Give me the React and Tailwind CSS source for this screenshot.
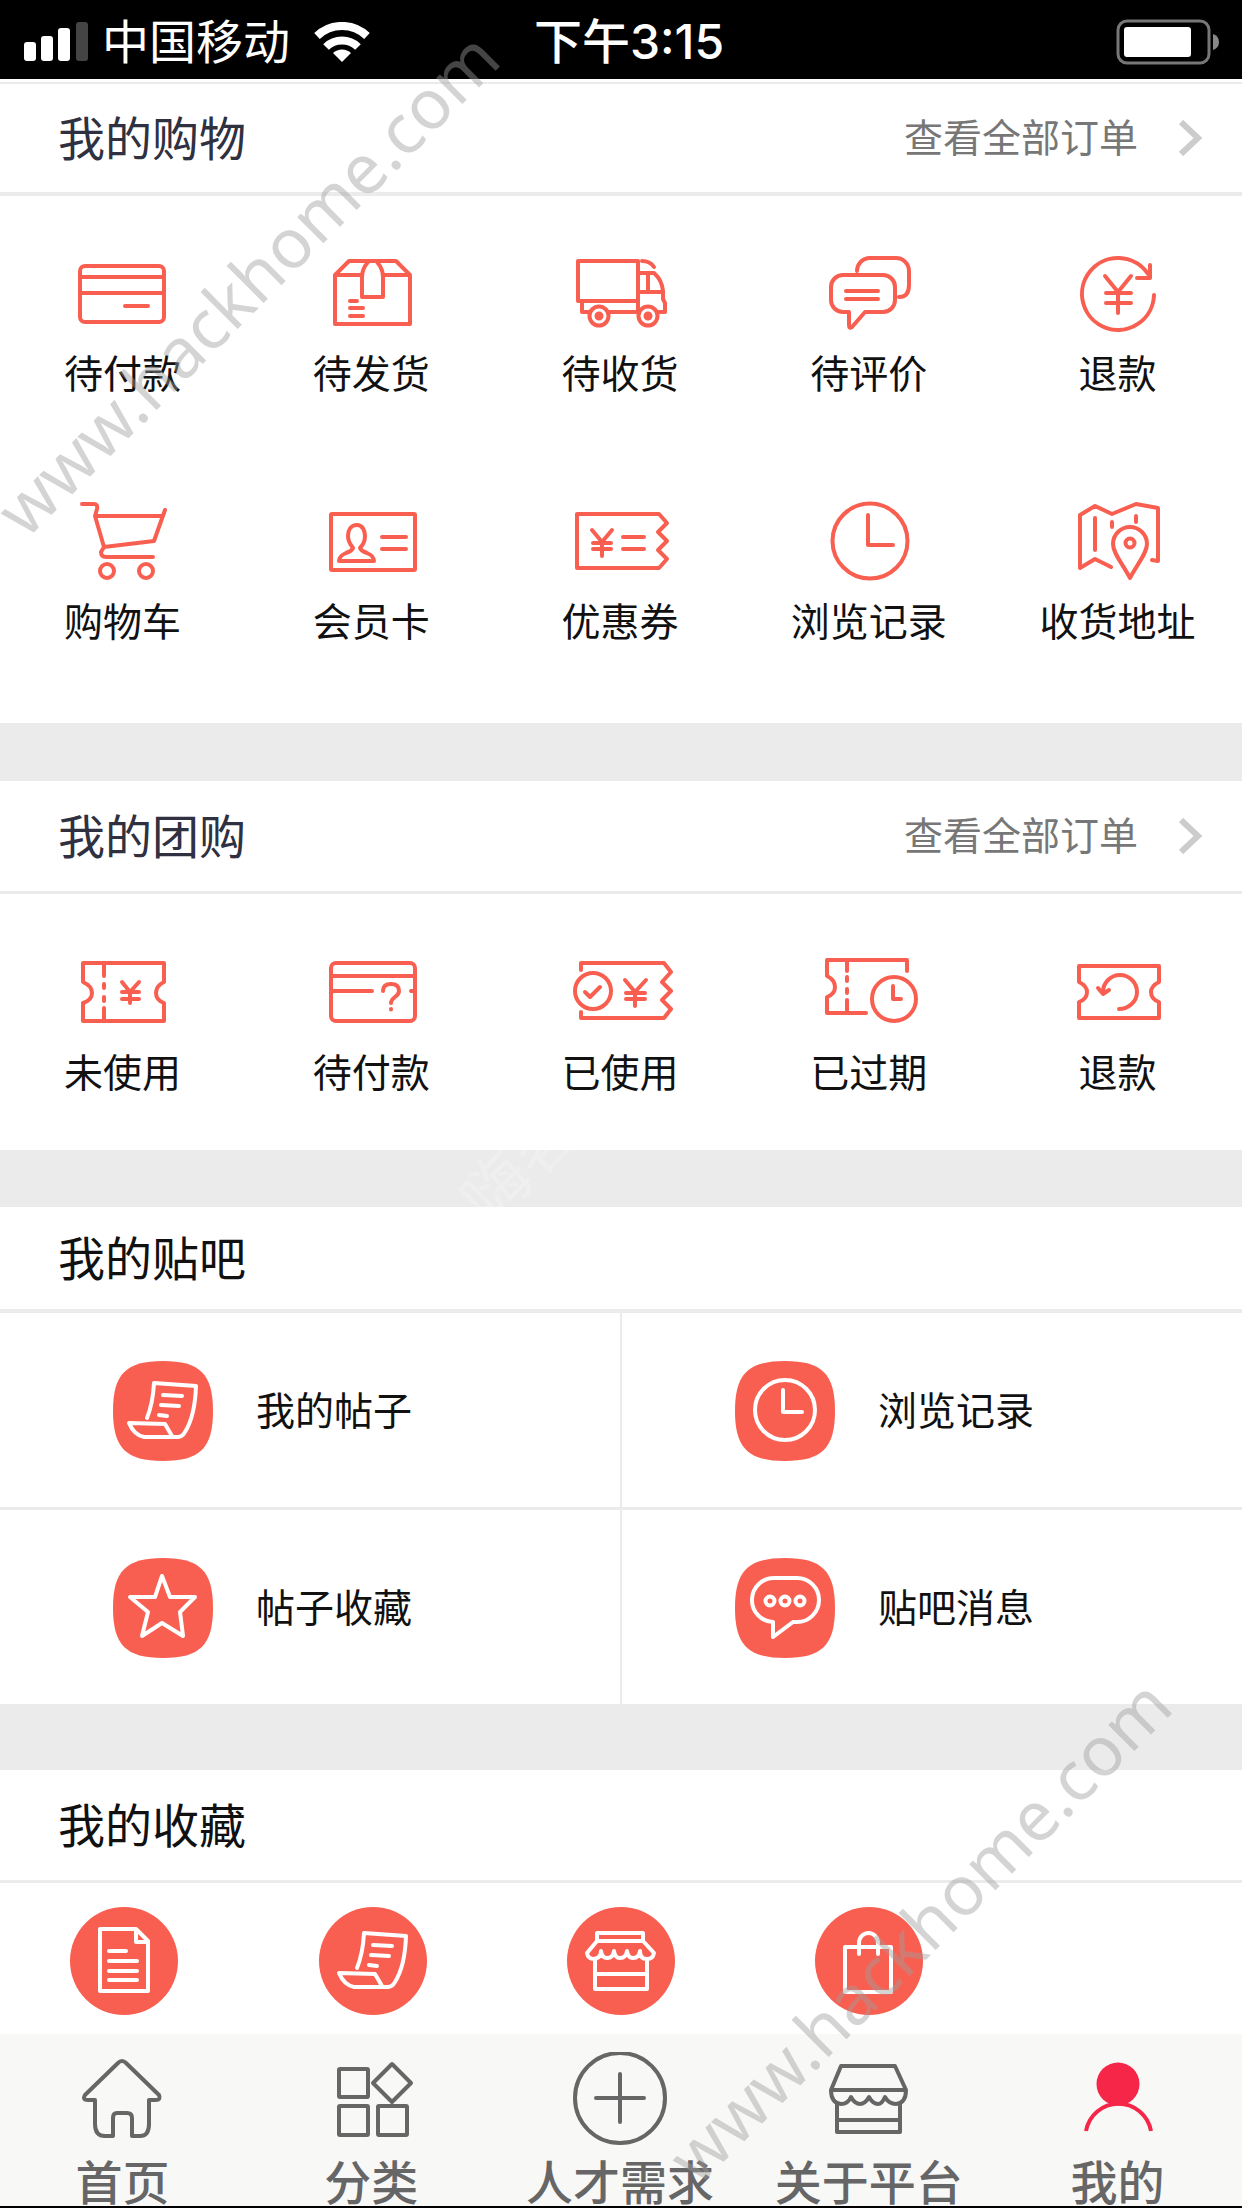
import React from "react";

const CORAL = "#f95f50";

/* ---------- drawing helpers ---------- */

// Line icon on a canvas whose origin is its centre.
function LineIcon({ children, color = CORAL, className = "h-[84px] w-[110px]", box = "-55 -42 110 84", width = 4 }) {
  return (
    <svg
      aria-hidden="true"
      viewBox={box}
      className={className}
      fill="none"
      stroke={color}
      strokeWidth={width}
      strokeLinecap="round"
      strokeLinejoin="round"
    >
      {children}
    </svg>
  );
}

/* ---------- shopping icons ---------- */

const CardIcon = () => (
  <LineIcon>
    <rect x="-42" y="-27" width="84" height="56" rx="5" />
    <path d="M-42-16H42M-42 0H42M3 13H26" />
  </LineIcon>
);

const BoxIcon = () => (
  <LineIcon>
    <path d="M-36-18L-22-32H25L39-18V31H-36ZM-36-18H-9M12-18H39" />
    <path d="M-3-31Q-9-24-9-16V4H12V-16Q12-24 6-31" />
    <path d="M-21 8H-14M-21 15H-8M-21 23H-8" />
  </LineIcon>
);

const TruckIcon = () => (
  <LineIcon>
    <path d="M-42-32H18V8H-42ZM-38 8V19H-31M-11 19H18M18 8V19M38 19H45V10L43 6V-2Q42-13 34-20H18M18-1H43M28-20V-1" />
    <path d="M22-32Q30-32 34-26" />
    <circle cx="-21" cy="23" r="9.5" />
    <circle cx="-21" cy="23" r="2.5" fill={CORAL} />
    <circle cx="28" cy="23" r="9.5" />
    <circle cx="28" cy="23" r="2.5" fill={CORAL} />
  </LineIcon>
);

const CommentsIcon = () => (
  <LineIcon>
    <path d="M-26-18H14A12 12 0 0 1 26-6V7A12 12 0 0 1 14 19H-4L-17 34Q-20 36-20 32V19H-26A12 12 0 0 1-38 7V-6A12 12 0 0 1-26-18Z" />
    <path d="M-23-2H9M-23 6H9" />
    <path d="M-12-22A13 13 0 0 1 0-35H27A13 13 0 0 1 40-22V-8Q40 4 30 4" />
  </LineIcon>
);

const RefundIcon = () => (
  <LineIcon>
    <path d="M36 2A36 36 0 1 1 30-19" />
    <path d="M32-28V-15H19" />
    <path d="M-13-17L0-1L13-17M0-1V20M-12 0H13M-12 10H13" />
  </LineIcon>
);

const CartIcon = () => (
  <LineIcon>
    <path d="M-40-37H-28Q-24-37-25-32L-27-25L-18 6L32 0L43-31M-27-25H40" />
    <path d="M-18 6L-21 11Q-21 16-16 16H31" />
    <circle cx="-15" cy="30" r="7" />
    <circle cx="24" cy="30" r="7" />
  </LineIcon>
);

const MemberCardIcon = () => (
  <LineIcon>
    <rect x="-40" y="-27" width="84" height="56" rx="1" />
    <path d="M-14-16C-20-16-23-11-23-5C-23 1-20 4-18 7Q-19 10-25 12Q-32 15-32 20H3Q3 15-4 12Q-10 10-11 7C-8 4-6 1-6-5C-6-11-9-16-14-16Z" />
    <path d="M11-4H35M11 8H35" />
  </LineIcon>
);

const CouponIcon = () => (
  <LineIcon>
    <path d="M-43-27H39L47-18L38-9L47 0L38 9L47 18L39 27H-43Z" />
    <path d="M-28-11L-18 1L-8-11M-18 1V15M-27 2H-9M-27 8H-9M3-4H24M3 8H24" />
  </LineIcon>
);

const ClockIcon = () => (
  <LineIcon>
    <circle cx="1" cy="0" r="37.5" />
    <path d="M-1-26V4H24" />
  </LineIcon>
);

const MapIcon = () => (
  <LineIcon>
    <path d="M-7 26L-23 18L-38 27V-26L-23-35L-6-27L18-37L40-33V20L34 19" />
    <path d="M-23-23V9M-6-19V-14M18-25V-19" />
    <path d="M12 37C4 22-5 12-5 3A17 17 0 0 1 29 3C29 12 20 22 12 37Z" />
    <circle cx="12" cy="2" r="4.5" />
  </LineIcon>
);

/* ---------- group-buy icons ---------- */

const TicketIcon = () => (
  <LineIcon>
    <path d="M-39-29H42V-10Q34-6 34 1Q34 8 42 11V29H-39V11Q-30 8-30 1Q-30-6-39-10Z" />
    <path d="M-18-28V-16M-18-8V-4M-18 5V9M-18 16V28" />
    <path d="M0-10L8 0L17-10M8 0V11M0 0H17M0 7H17" />
  </LineIcon>
);

const CardQuestionIcon = () => (
  <LineIcon>
    <rect x="-40" y="-29" width="84" height="58" rx="5" />
    <path d="M-40-16H44M-40-1H1M40-1H44" />
    <path d="M12-1Q12-8 20-8Q28-8 28-1Q28 2 24 5Q20 8 20 11M20 17V17.5" />
  </LineIcon>
);

const TicketUsedIcon = () => (
  <LineIcon>
    <path d="M-39-22V-29H44L51-20L42-10L51-1L42 8L51 17L44 26H-39V20" />
    <circle cx="-27" cy="-1" r="18" />
    <path d="M-35 0L-30 5L-20-5" />
    <path d="M5-12L15 0L26-12M15 0V14M6 1H25M6 7H25" />
  </LineIcon>
);

const TicketExpiredIcon = () => (
  <LineIcon>
    <path d="M38-21V-32H-42V-16Q-34-12-34-5Q-34 2-42 5V21H-3" />
    <path d="M-22-31V-21M-22-15V-11M-22-3V1M-22 8V20" />
    <circle cx="25" cy="7" r="22" />
    <path d="M24-6V7H32" />
  </LineIcon>
);

const TicketRefundIcon = () => (
  <LineIcon>
    <path d="M-39-26H41V-10Q33-6 33 0Q33 7 41 10V26H-39V10Q-31 7-31 0Q-31-6-39-10Z" />
    <path d="M1 17C10 17 19 10 19 0A17 17 0 0 0-15 0M-20-4L-15 2L-9-2" />
  </LineIcon>
);

/* ---------- white glyphs on coral ---------- */

const ScrollGlyph = () => (
  <>
    <path d="M-16 7Q-10-8-9-28L33-25Q32 5 22 21Q19 26 15 26H-19Q-29 24-34 12L2 13L9 25" />
    <path d="M0-16L19-15M-2-6L16-5M-4 4L4 5" />
  </>
);

const ClockGlyph = () => (
  <>
    <circle cx="0" cy="-1" r="30" />
    <path d="M-2-21V1H17" />
  </>
);

const StarGlyph = () => <path d="M-1-32L7-11L32-11L17 4L20 28L-1 15L-21 28L-15 4L-33-11L-8-11Z" />;

const MessageGlyph = () => (
  <>
    <path d="M-10-30H12A22 22 0 0 1 12 14H8L-12 29V14A22 22 0 0 1-10-30Z" />
    <circle cx="-15" cy="-7" r="4.5" />
    <circle cx="0" cy="-7" r="4.5" />
    <circle cx="15" cy="-7" r="4.5" />
  </>
);

const DocumentGlyph = () => (
  <>
    <path d="M-24-32H12L24-20V30H-24ZM12-32V-19H24" />
    <path d="M-15-10H2M-15 0H13M-15 10H13M-15 19H13" />
  </>
);

const ShopGlyph = () => (
  <>
    <path d="M-24-20V-28H22V-20ZM-24-20L-34-8Q-33-2-27-2Q-20-3-20-10Q-19-3-14-3Q-8-3-7-10Q-6-3-1-3Q5-3 6-10Q7-3 12-3Q18-3 19-10Q19-2 26-2Q32-2 33-8L22-20" />
    <path d="M-26-2V28H26V-2M-26 13H26" />
  </>
);

const BagGlyph = () => (
  <>
    <rect x="-24" y="-14" width="46" height="45" />
    <path d="M-10-7V-18A9.5 10 0 0 1 9-18V-7" />
  </>
);

function TileIcon({ glyph: Glyph }) {
  return (
    <LineIcon color="#ffffff" box="-50 -50 100 100" className="size-[100px] shrink-0">
      <path
        d="M0-50C37-50 50-37 50 0C50 37 37 50 0 50C-37 50-50 37-50 0C-50-37-37-50 0-50Z"
        fill={CORAL}
        stroke="none"
      />
      <Glyph />
    </LineIcon>
  );
}

function RoundIcon({ glyph: Glyph }) {
  return (
    <LineIcon color="#ffffff" box="-54 -54 108 108" className="size-[108px]">
      <circle r="54" fill={CORAL} stroke="none" />
      <Glyph />
    </LineIcon>
  );
}

/* ---------- tab bar icons ---------- */

const HomeTab = () => (
  <path d="M-4-37Q0-41 4-37L37-5Q39 0 34 0H27V24Q27 36 18 36H10V18Q10 13 5 13H-5Q-9 13-9 18V36H-17Q-27 36-27 24V0H-34Q-40 0-37-5Z" />
);

const CategoryTab = () => (
  <>
    <rect x="-32" y="-31" width="29" height="28" rx="1" />
    <rect x="-32" y="6" width="29" height="29" rx="1" />
    <rect x="7" y="6" width="29" height="29" rx="1" />
    <path d="M21-36L40-17L21 2L2-17Z" />
  </>
);

const PlusTab = () => (
  <>
    <circle cx="0" cy="-2" r="45" />
    <path d="M-24-2H24M0-26V22" />
  </>
);

const ShopTab = () => (
  <>
    <path d="M-28-34H26L37-10H-38ZM-38-10Q-38 3-28 4Q-21 4-18-3Q-14 4-9 4Q-4 4 0-3Q4 4 9 4Q13 4 16-3Q20 4 27 4Q37 3 37-10" />
    <path d="M-32 4V32H31V4M-32 20H31" />
  </>
);

const MineTab = () => (
  <>
    <circle cx="0" cy="-16" r="21.5" fill="#f62648" stroke="none" />
    <path d="M-32 31A33 33 0 0 1 33 31" strokeLinecap="butt" />
  </>
);

/* ---------- data ---------- */

const shopping = [
  { label: "待付款", icon: CardIcon },
  { label: "待发货", icon: BoxIcon },
  { label: "待收货", icon: TruckIcon },
  { label: "待评价", icon: CommentsIcon },
  { label: "退款", icon: RefundIcon },
  { label: "购物车", icon: CartIcon },
  { label: "会员卡", icon: MemberCardIcon },
  { label: "优惠券", icon: CouponIcon },
  { label: "浏览记录", icon: ClockIcon },
  { label: "收货地址", icon: MapIcon },
];

const groupBuy = [
  { label: "未使用", icon: TicketIcon },
  { label: "待付款", icon: CardQuestionIcon },
  { label: "已使用", icon: TicketUsedIcon },
  { label: "已过期", icon: TicketExpiredIcon },
  { label: "退款", icon: TicketRefundIcon },
];

const forum = [
  { label: "我的帖子", glyph: ScrollGlyph },
  { label: "浏览记录", glyph: ClockGlyph },
  { label: "帖子收藏", glyph: StarGlyph },
  { label: "贴吧消息", glyph: MessageGlyph },
];

const favourites = [
  { label: "文章", glyph: DocumentGlyph },
  { label: "帖子", glyph: ScrollGlyph },
  { label: "店铺", glyph: ShopGlyph },
  { label: "商品", glyph: BagGlyph },
];

const tabs = [
  { label: "首页", icon: HomeTab },
  { label: "分类", icon: CategoryTab },
  { label: "人才需求", icon: PlusTab },
  { label: "关于平台", icon: ShopTab },
  { label: "我的", icon: MineTab, active: true },
];

/* ---------- page parts ---------- */

function StatusBar() {
  return (
    <div className="grid h-[79px] grid-cols-[1fr_auto_1fr] items-center bg-black pt-1 pr-2 pl-6 text-white">
      <div className="flex items-center">
        <svg aria-hidden="true" viewBox="0 0 64 40" className="h-10 w-16" fill="#fff">
          <rect x="0" y="20" width="12" height="19" rx="3" />
          <rect x="17" y="14" width="12" height="25" rx="3" />
          <rect x="34" y="6" width="12" height="33" rx="3" />
          <rect x="52" y="0" width="12" height="39" rx="3" fill="#444" />
        </svg>
        <span className="ml-3.5 text-[47px] leading-[48px]">中国移动</span>
        <svg aria-hidden="true" viewBox="0 0 56 40" className="ml-6 h-10 w-14" fill="none" stroke="#fff" strokeWidth="8">
          <path d="M3 14A36 36 0 0 1 53 14" />
          <path d="M12 25A23 23 0 0 1 44 25" />
          <path d="M28 40L19 31A13 13 0 0 1 37 31Z" fill="#fff" stroke="none" />
        </svg>
      </div>
      <span className="text-[48px] leading-[48px] font-medium">下午3:15</span>
      <svg aria-hidden="true" viewBox="0 0 104 46" className="mr-3.5 h-[46px] w-[104px] justify-self-end">
        <rect x="2" y="2" width="91" height="42" rx="9" fill="none" stroke="#777" strokeWidth="3" />
        <rect x="8" y="8" width="67" height="30" rx="3" fill="#fff" />
        <path d="M97 15Q103 17 103 23Q103 29 97 31Z" fill="#888" />
      </svg>
    </div>
  );
}

function SectionHeader({ title, more, className = "" }) {
  return (
    <header className={"flex items-center justify-between border-[#ebebeb] pr-[38px] pl-[58px] " + className}>
      <h2 className="pt-0.5 text-[47px] leading-[48px]">{title}</h2>
      {more && (
        <a href="#orders" className="flex items-center gap-10 text-[39px] leading-[48px] text-[#777]">
          {more}
          <svg aria-hidden="true" viewBox="0 0 26 36" className="h-9 w-[26px]" fill="none" stroke="#ccc" strokeWidth="6">
            <path d="M3 2L20 18L3 34" />
          </svg>
        </a>
      )}
    </header>
  );
}

function IconGrid({ items, className }) {
  return (
    <div className={"-ml-0.5 grid grid-cols-5 gap-y-[101px] " + className}>
      {items.map(({ label, icon: Icon }) => (
        <a key={label} href="#item" className="flex flex-col items-center gap-[15px]">
          <Icon />
          <span className="text-[39px] leading-[48px]">{label}</span>
        </a>
      ))}
    </div>
  );
}

function Watermark({ className, children }) {
  return (
    <span className={"absolute origin-bottom-left -rotate-45 leading-none whitespace-nowrap " + className}>
      {children}
    </span>
  );
}

export default function App() {
  return (
    <div className="relative flex min-h-screen flex-col overflow-hidden bg-[#ebebeb] font-['Inter','Noto_Sans_CJK_SC',sans-serif] text-[#111]">
      <StatusBar />

      <main className="flex flex-1 flex-col">
        <section className="bg-white pt-[3px]">
          <SectionHeader
            title="我的购物"
            more="查看全部订单"
            className="h-[114px] border-t-2 border-b-4 text-[#2f3040]"
          />
          <IconGrid items={shopping} className="pt-[55px] pb-[77px]" />
        </section>

        <section className="mt-[58px] bg-white">
          <SectionHeader title="我的团购" more="查看全部订单" className="h-[113px] border-b-[3px] text-[#2f3040]" />
          <IconGrid items={groupBuy} className="pt-14 pb-[53px]" />
        </section>

        <section className="mt-[57px] bg-white">
          <SectionHeader title="我的贴吧" className="h-[106px] border-b-4" />
          <div className="grid grid-cols-2 gap-x-0.5 gap-y-[3px] bg-[#ebebeb]">
            {forum.map(({ label, glyph }) => (
              <a key={label} href="#forum" className="flex h-[194px] items-center gap-[43px] bg-white pt-0.5 pl-[113px]">
                <TileIcon glyph={glyph} />
                <span className="text-[39px] leading-[48px]">{label}</span>
              </a>
            ))}
          </div>
        </section>

        <section className="mt-[66px] flex-1 bg-white">
          <SectionHeader title="我的收藏" className="h-[113px] border-b-[3px]" />
          <div className="grid grid-cols-5 pt-6 pb-[18px]">
            {favourites.map(({ label, glyph }) => (
              <a key={label} href="#favourite" aria-label={label} className="flex justify-center">
                <RoundIcon glyph={glyph} />
              </a>
            ))}
          </div>
        </section>
      </main>

      <nav className="-ml-0.5 grid grid-cols-5 border-b-2 border-black bg-[#f8f8f7] pt-[18px]">
        {tabs.map(({ label, icon: Icon, active }) => (
          <a key={label} href="#tab" className="flex flex-col items-center gap-3 text-[#666]">
            <LineIcon color={active ? "#f62648" : "#666666"} box="-55 -48 110 96" className="h-24 w-[110px]">
              <Icon />
            </LineIcon>
            <span className="text-[47px] leading-[46px] font-medium">{label}</span>
          </a>
        ))}
      </nav>

      <div className="pointer-events-none absolute inset-0 overflow-hidden font-['Noto_Sans',sans-serif] text-[rgba(156,156,156,0.44)]">
        <Watermark className="top-[477px] left-[32px] text-[69px]">www.hackhome.com</Watermark>
        <Watermark className="top-[2124px] left-[704px] text-[69px]">www.hackhome.com</Watermark>
        <Watermark className="top-[1164px] left-[492px] font-['Noto_Sans_CJK_SC',sans-serif] text-[66px] text-white/20">
          嗨客
        </Watermark>
      </div>
    </div>
  );
}
